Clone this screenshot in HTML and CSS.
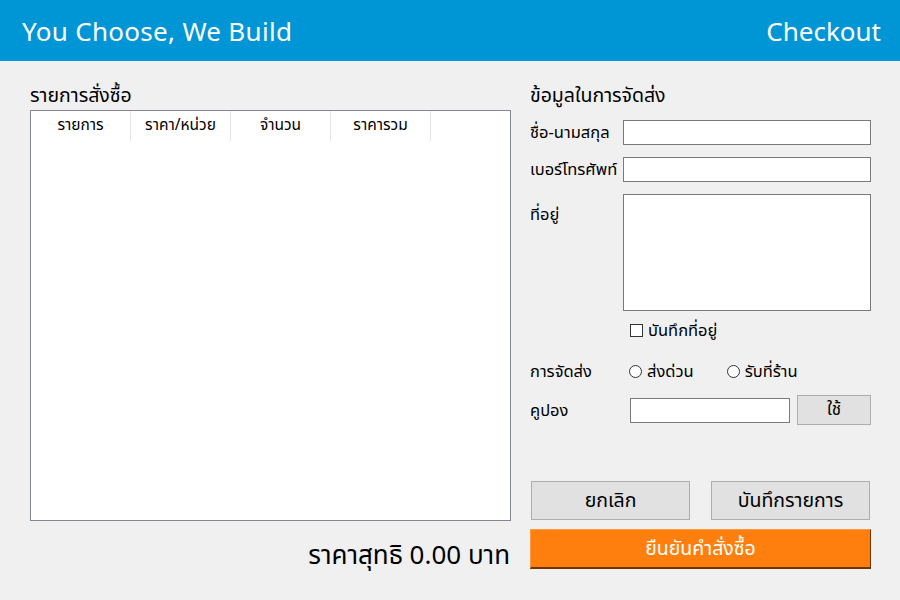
FILE: index.html
```html
<!DOCTYPE html>
<html lang="th">
<head>
<meta charset="utf-8">
<title>Checkout</title>
<link rel="stylesheet" href="styles.css">
</head>
<body>
<header class="topbar">
  <div class="brand">You Choose, We Build</div>
  <div class="page-title">Checkout</div>
</header>
<main class="layout">
  <section class="orders">
    <h2 class="section-title">รายการสั่งซื้อ</h2>
    <div class="listbox">
      <div class="list-head">
        <div class="col">รายการ</div>
        <div class="col">ราคา/หน่วย</div>
        <div class="col">จำนวน</div>
        <div class="col">ราคารวม</div>
      </div>
    </div>
    <div class="total">ราคาสุทธิ 0.00 บาท</div>
  </section>
  <section class="shipping">
    <h2 class="section-title">ข้อมูลในการจัดส่ง</h2>
    <div class="row row-name">
      <label class="lbl">ชื่อ-นามสกุล</label>
      <div class="textbox"></div>
    </div>
    <div class="row row-phone">
      <label class="lbl">เบอร์โทรศัพท์</label>
      <div class="textbox"></div>
    </div>
    <div class="row row-address">
      <label class="lbl lbl-top">ที่อยู่</label>
      <div class="textbox textarea"></div>
    </div>
    <div class="row row-check">
      <span class="lbl"></span>
      <span class="check-opt"><span class="checkbox"></span>บันทึกที่อยู่</span>
    </div>
    <div class="row row-delivery">
      <label class="lbl">การจัดส่ง</label>
      <span class="radio-opt"><span class="radio"></span>ส่งด่วน</span>
      <span class="radio-opt"><span class="radio"></span>รับที่ร้าน</span>
    </div>
    <div class="row row-coupon">
      <label class="lbl">คูปอง</label>
      <div class="textbox coupon-box"></div>
      <div class="btn btn-apply">ใช้</div>
    </div>
    <div class="actions">
      <div class="btn btn-action">ยกเลิก</div>
      <div class="btn btn-action">บันทึกรายการ</div>
    </div>
    <div class="btn-confirm">ยืนยันคำสั่งซื้อ</div>
  </section>
</main>
</body>
</html>
```

FILE: styles.css
```css
* { box-sizing: border-box; }
html, body { margin: 0; padding: 0; }
body {
  width: 900px;
  height: 600px;
  overflow: hidden;
  background: #f0f0f0;
  font-family: "Noto Sans Thai", "Noto Sans Thai Looped", "Kanit", "Noto Sans", "DejaVu Sans", sans-serif;
  color: #000;
}
.topbar {
  height: 61px;
  background: #0096d6;
  color: #fff;
  display: flex;
  justify-content: space-between;
  align-items: center;
  padding: 0 19px 0 22px;
  font-family: "Noto Sans", sans-serif;
  font-size: 26px;
}
.brand { letter-spacing: 0.3px; }
.page-title { letter-spacing: 0; }
.layout {
  display: grid;
  grid-template-columns: 481px 341px;
  column-gap: 19px;
  padding: 22px 0 0 30px;
}
.section-title {
  margin: 0;
  font-size: 19.5px;
  font-weight: 400;
  height: 26px;
  line-height: 27px;
}
.orders .section-title { margin-bottom: 1px; }
.listbox {
  height: 411px;
  background: #fff;
  border: 1px solid #828790;
}
.list-head { display: flex; height: 30px; }
.col {
  width: 100px;
  border-right: 1px solid #e5e5e5;
  text-align: center;
  font-size: 15.5px;
  line-height: 30px;
}
.total {
  margin-top: 15px;
  text-align: right;
  font-size: 26px;
  line-height: 40px;
  padding-right: 1px;
}
.row { display: flex; align-items: center; }
.lbl { width: 93px; flex: none; font-size: 16.5px; }
.textbox {
  width: 248px;
  height: 25px;
  background: #fff;
  border: 1px solid #7a7a7a;
}
.row-name { margin-top: 11px; }
.row-phone { margin-top: 12px; }
.row-address { margin-top: 12px; align-items: flex-start; }
.textarea { height: 117px; }
.lbl-top { padding-top: 8px; }
.row-check { margin-top: 7px; height: 24px; }
.check-opt, .radio-opt {
  display: flex; align-items: center; font-size: 16.5px;
}
.check-opt { margin-left: 7px; }
.checkbox {
  width: 13px; height: 13px;
  border: 1px solid #333;
  background: #fff;
  margin-right: 5px;
}
.row-delivery { margin-top: 17px; height: 24px; }
.radio-opt:first-of-type { margin-left: 6px; }
.radio-opt + .radio-opt { margin-left: 33px; }
.radio {
  width: 13px; height: 13px;
  border: 1px solid #333;
  border-radius: 50%;
  background: #fff;
  margin-right: 5px;
}
.row-coupon { margin-top: 12px; height: 30px; }
.coupon-box { width: 160px; margin-left: 7px; }
.btn {
  display: flex; align-items: center; justify-content: center;
  background: #e1e1e1;
  border: 1px solid #adadad;
}
.btn-apply { width: 74px; height: 30px; margin-left: 7px; font-size: 17px; }
.actions {
  margin-top: 56px;
  display: flex;
  gap: 21px;
  padding-left: 1px;
}
.btn-action { width: 159px; height: 39px; font-size: 19.5px; }
.btn-confirm {
  margin-top: 9px;
  height: 40px;
  background: #ff7f0e;
  color: #fff;
  font-size: 19.5px;
  display: flex; align-items: center; justify-content: center;
  border-top: 1px solid #ff9a40;
  border-left: 1px solid #ff9a40;
  border-right: 1px solid #6e3500;
  border-bottom: 2px solid #6e3500;
}
```
